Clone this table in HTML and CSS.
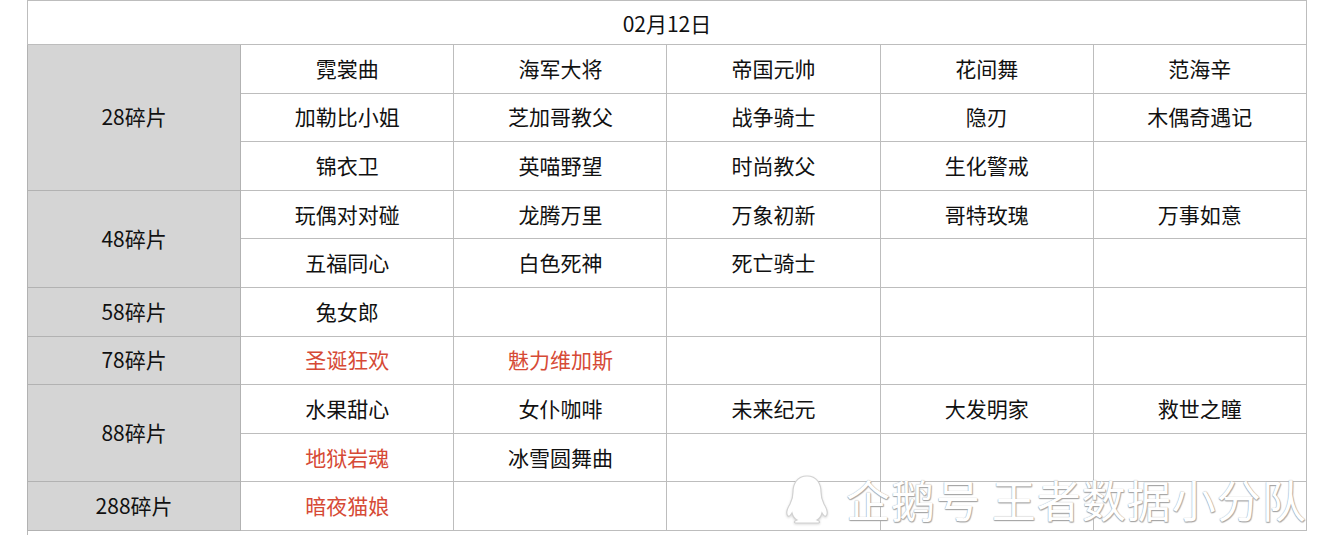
FILE: index.html
```html
<!DOCTYPE html>
<html lang="zh">
<head>
<meta charset="utf-8">
<link rel="stylesheet" href="styles.css">
</head>
<body>
<div class="page">
<table class="grid">
  <colgroup>
    <col class="c"><col class="c"><col class="c"><col class="c"><col class="c"><col class="c">
  </colgroup>
  <tr class="head"><td colspan="6">02月12日</td></tr>
  <tr class="r"><td class="lbl" rowspan="3">28碎片</td><td>霓裳曲</td><td>海军大将</td><td>帝国元帅</td><td>花间舞</td><td>范海辛</td></tr>
  <tr class="r"><td>加勒比小姐</td><td>芝加哥教父</td><td>战争骑士</td><td>隐刃</td><td>木偶奇遇记</td></tr>
  <tr class="r"><td>锦衣卫</td><td>英喵野望</td><td>时尚教父</td><td>生化警戒</td><td></td></tr>
  <tr class="r"><td class="lbl" rowspan="2">48碎片</td><td>玩偶对对碰</td><td>龙腾万里</td><td>万象初新</td><td>哥特玫瑰</td><td>万事如意</td></tr>
  <tr class="r"><td>五福同心</td><td>白色死神</td><td>死亡骑士</td><td></td><td></td></tr>
  <tr class="r"><td class="lbl">58碎片</td><td>兔女郎</td><td></td><td></td><td></td><td></td></tr>
  <tr class="r"><td class="lbl">78碎片</td><td class="red">圣诞狂欢</td><td class="red">魅力维加斯</td><td></td><td></td><td></td></tr>
  <tr class="r"><td class="lbl" rowspan="2">88碎片</td><td>水果甜心</td><td>女仆咖啡</td><td>未来纪元</td><td>大发明家</td><td>救世之瞳</td></tr>
  <tr class="r"><td class="red">地狱岩魂</td><td>冰雪圆舞曲</td><td></td><td></td><td></td></tr>
  <tr class="r"><td class="lbl">288碎片</td><td class="red">暗夜猫娘</td><td></td><td></td><td></td><td></td></tr>
</table>
<div class="tail"></div>
<div class="watermark">
  <svg class="penguin" width="46" height="52" viewBox="0 0 46 52">
    <path d="M23 3 C13 3 9 11 9 19 C9 24 8 27 6 31 C3 36 2 41 4 43 C5 44 7 42 8 40 C9 44 11 46 13 47 C10 48 9 50 13 50 L33 50 C37 50 36 48 33 47 C35 46 37 44 38 40 C39 42 41 44 42 43 C44 41 43 36 40 31 C38 27 37 24 37 19 C37 11 33 3 23 3 Z" fill="#ffffff" stroke="#d2d2d2" stroke-width="1.2"/>
  </svg>
  <span class="wm-text">企鹅号 王者数据小分队</span>
</div>
</div>
</body>
</html>
```
FILE: styles.css
```css
html, body {
  margin: 0;
  padding: 0;
  background: #ffffff;
}
.page {
  position: relative;
  width: 1334px;
  height: 547px;
  overflow: hidden;
}
.grid {
  margin-left: 27px;
  border-collapse: collapse;
  table-layout: fixed;
  width: 1279px;
  font-family: "Noto Sans CJK SC", "Noto Sans", sans-serif;
  font-size: 21px;
  color: #111111;
}
.grid col.c {
  width: 213.17px;
}
.grid td {
  border: 1px solid #bdbdbd;
  text-align: center;
  vertical-align: middle;
  padding: 0;
  line-height: 24px;
}
.head td {
  height: 43px;
  font-size: 21px;
}
.r td {
  height: 45.6px;
  padding-bottom: 2px;
}
.grid td.lbl {
  background: #d5d5d5;
  border-color: #b2b2b2;
}
.grid td.red {
  color: #d64a36;
}
.tail {
  margin-left: 27px;
  width: 1px;
  height: 4px;
  background: #b8b8b8;
}
.watermark {
  position: absolute;
  left: 784px;
  top: 473px;
  display: flex;
  align-items: center;
  gap: 16px;
}
.penguin {
  display: block;
  filter: drop-shadow(0 1px 1px rgba(0,0,0,0.15));
}
.wm-text {
  font-family: "Noto Sans CJK SC", sans-serif;
  font-size: 44px;
  line-height: 52px;
  color: #ffffff;
  letter-spacing: 1px;
  text-shadow: 0 0 1px #9a9a9a, 0 1px 1px #a8a8a8, 1px 1px 1px #b5b5b5;
}
```
